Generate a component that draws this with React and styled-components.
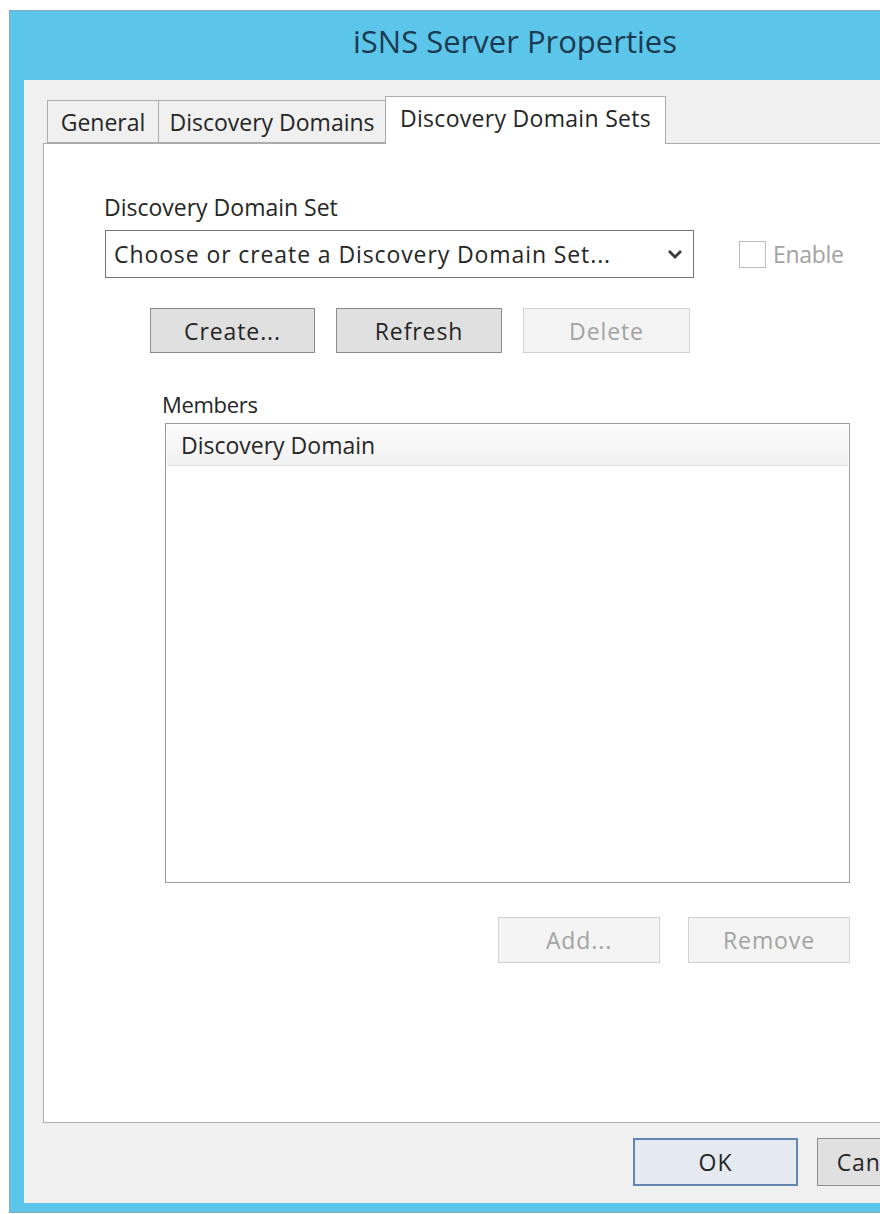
import styled, { createGlobalStyle } from 'styled-components';

const GlobalStyle = createGlobalStyle`
  html, body {
    margin: 0;
    padding: 0;
    background: #ffffff;
    overflow: hidden;
  }
  body {
    font-family: "Open Sans", "Noto Sans", sans-serif;
    color: #262626;
  }
  * {
    box-sizing: border-box;
  }
`;

export default function App() {
  return (
    <>
      <GlobalStyle />
      <Window>
        <TitleBar>iSNS Server Properties</TitleBar>
        <Client>
          <TabStrip>
            <Tab width={112}>General</Tab>
            <Tab width={228}>Discovery Domains</Tab>
            <Tab width={281} active>Discovery Domain Sets</Tab>
          </TabStrip>

          <Panel>
            <FieldLabel>Discovery Domain Set</FieldLabel>
            <ComboRow>
              <Combo>
                <span>Choose or create a Discovery Domain Set...</span>
                <svg width="16" height="10" viewBox="0 0 16 10">
                  <polyline points="2,2 8,8 14,2" fill="none" stroke="#3a3a3a" strokeWidth="2.8" />
                </svg>
              </Combo>
              <CheckField>
                <CheckBox />
                <span>Enable</span>
              </CheckField>
            </ComboRow>

            <ButtonRow>
              <Button width={165}>Create...</Button>
              <Button width={166}>Refresh</Button>
              <Button width={167} disabled>Delete</Button>
            </ButtonRow>

            <Members>
              <MembersLabel>Members</MembersLabel>
              <ListBox>
                <ListHeader>Discovery Domain</ListHeader>
              </ListBox>
              <ActionRow>
                <Button width={162} height={46} disabled>Add...</Button>
                <Button width={162} height={46} disabled>Remove</Button>
              </ActionRow>
            </Members>
          </Panel>

          <DialogButtons>
            <Button width={165} height={48} primary>OK</Button>
            <Button width={116} height={48}>Cancel</Button>
          </DialogButtons>
        </Client>
      </Window>
    </>
  );
}

// Window chrome

const Window = styled.div`
  margin: 10px 0 0 9px;
  width: 1012px;
  border: 1px solid #86a9ba;
  background: #5cc6ea;
  padding: 0 14px 9px 14px;
`;

const TitleBar = styled.div`
  height: 69px;
  display: flex;
  align-items: center;
  justify-content: center;
  padding-bottom: 10px;
  font-size: 31px;
  color: #1b3a52;
`;

const Client = styled.div`
  background: #f0f0f0;
  height: 1123px;
  padding: 16px 19px 0;
  display: flex;
  flex-direction: column;
`;

// Tabs

const TabStrip = styled.div`
  display: flex;
  align-items: flex-end;
  height: 47px;
  padding-left: 5px;
`;

const Tab = styled.div`
  position: relative;
  width: ${(p) => p.width}px;
  height: ${(p) => (p.active ? 48 : 43)}px;
  margin-left: -1px;
  margin-bottom: ${(p) => (p.active ? -1 : 0)}px;
  z-index: ${(p) => (p.active ? 1 : 0)};
  display: flex;
  align-items: center;
  justify-content: center;
  padding-bottom: ${(p) => (p.active ? 6 : 0)}px;
  border: 1px solid #acacac;
  border-bottom: ${(p) => (p.active ? 'none' : '1px solid #acacac')};
  background: ${(p) => (p.active ? '#ffffff' : '#f0f0f0')};
  font-size: 23px;
  letter-spacing: ${(p) => (p.active ? 0.3 : 0)}px;
  color: #262626;
`;

const Panel = styled.div`
  height: 980px;
  background: #ffffff;
  border: 1px solid #acacac;
  padding-left: 60px;
  display: flex;
  flex-direction: column;
  align-items: flex-start;
`;

// Domain set chooser

const FieldLabel = styled.div`
  margin-top: 48px;
  height: 31px;
  line-height: 31px;
  font-size: 23px;
`;

const ComboRow = styled.div`
  margin-top: 7px;
  display: flex;
  align-items: center;
`;

const Combo = styled.div`
  width: 589px;
  height: 48px;
  margin-left: 1px;
  border: 1px solid #747474;
  background: #ffffff;
  display: flex;
  align-items: center;
  justify-content: space-between;
  padding: 0 10px 0 8px;
  font-size: 23px;
  letter-spacing: 0.9px;
`;

const CheckField = styled.label`
  margin-left: 45px;
  display: flex;
  align-items: center;
  gap: 7px;
  font-size: 23px;
  letter-spacing: -0.3px;
  color: #a2a2a2;
`;

const CheckBox = styled.span`
  width: 27px;
  height: 27px;
  border: 1px solid #bdbdbd;
  background: #ffffff;
`;

const ButtonRow = styled.div`
  margin-top: 30px;
  margin-left: 46px;
  display: flex;
  gap: 21px;
`;

const Button = styled.div`
  width: ${(p) => p.width}px;
  height: ${(p) => p.height || 45}px;
  display: flex;
  align-items: center;
  justify-content: center;
  font-size: 23px;
  letter-spacing: 0.9px;
  color: ${(p) => (p.disabled ? '#a3a3a3' : '#262626')};
  background: ${(p) => (p.disabled ? '#f4f4f4' : p.primary ? '#e4eaf0' : '#e0e0e0')};
  border: ${(p) =>
    p.primary ? '2px solid #6286ad' : p.disabled ? '1px solid #d2d2d2' : '1px solid #8c8c8c'};
`;

// Members list

const Members = styled.div`
  margin-left: 61px;
  width: 685px;
  display: flex;
  flex-direction: column;
`;

const MembersLabel = styled.div`
  margin-top: 36px;
  margin-left: -3px;
  height: 30px;
  line-height: 30px;
  font-size: 22px;
  letter-spacing: -0.3px;
`;

const ListBox = styled.div`
  margin-top: 4px;
  height: 460px;
  border: 1px solid #9c9c9c;
  background: #ffffff;
  padding: 0 1px;
`;

const ListHeader = styled.div`
  height: 42px;
  display: flex;
  align-items: center;
  padding-left: 14px;
  background: linear-gradient(#fbfbfb, #f2f2f2);
  border-bottom: 1px solid #e2e2e2;
  font-size: 23px;
`;

const ActionRow = styled.div`
  margin-top: 34px;
  display: flex;
  justify-content: flex-end;
  gap: 28px;
`;

const DialogButtons = styled.div`
  margin-top: 15px;
  padding-left: 590px;
  display: flex;
  gap: 19px;
`;
